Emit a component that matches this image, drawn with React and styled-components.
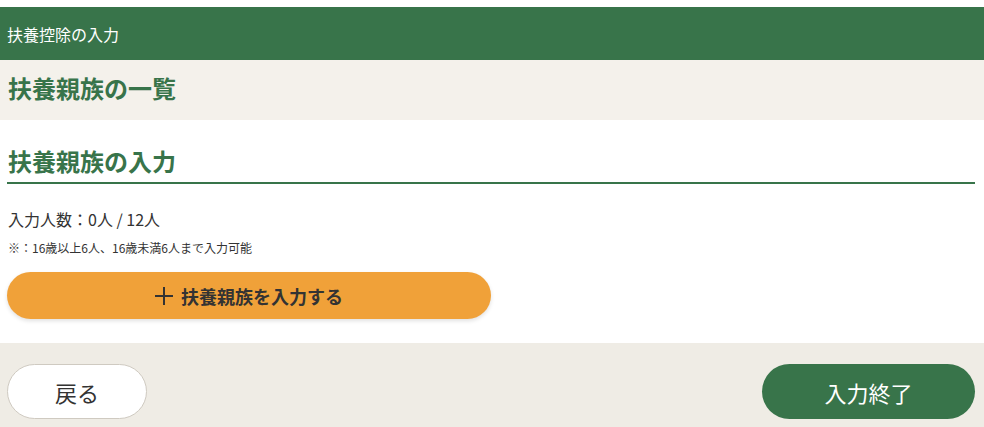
import React from "react";
import styled, { createGlobalStyle } from "styled-components";

const GlobalStyle = createGlobalStyle`
  html, body {
    margin: 0;
    padding: 0;
    background: #ffffff;
  }
  body {
    font-family: "Noto Sans CJK JP", "Noto Sans", sans-serif;
    color: #333333;
  }
`;

const Page = styled.div`
  padding-top: 7px;
  display: flex;
  flex-direction: column;
`;

const TopBar = styled.header`
  height: 53px;
  background: #38744a;
  color: #ffffff;
  display: flex;
  align-items: center;
  padding: 0 7px;
  font-size: 16px;
`;

const Section = styled.section`
  background: ${(p) => p.$bg || "#ffffff"};
  padding: 0 9px 0 7px;
`;

const Heading = styled.h2`
  margin: 0;
  color: #38744a;
  font-size: 24px;
  font-weight: 700;
  line-height: 24px;
  padding: ${(p) => (p.$underline ? "29px 1px 9px" : "16px 1px 20px")};
  border-bottom: ${(p) => (p.$underline ? "2px solid #38744a" : "none")};
`;

const Count = styled.p`
  margin: 23px 1px 0;
  font-size: 16px;
  line-height: 24px;
`;

const Note = styled.p`
  margin: 8px 1px 0;
  font-size: 12px;
  line-height: 18px;
`;

const AddButton = styled.button`
  margin: 15px 0 24px;
  width: 484px;
  height: 47px;
  border: none;
  border-radius: 24px;
  background: #f0a139;
  box-shadow: 0 2px 4px rgba(0, 0, 0, 0.12);
  font-family: inherit;
  font-size: 18px;
  font-weight: 700;
  color: #333333;
  display: flex;
  align-items: center;
  justify-content: center;
  gap: 8px;
  cursor: pointer;
`;

const Footer = styled.footer`
  background: #efece5;
  padding: 21px 9px 8px 7px;
  display: flex;
  justify-content: space-between;
`;

const FooterButton = styled.button`
  height: 55px;
  width: ${(p) => (p.$primary ? "213px" : "140px")};
  border-radius: 28px;
  border: ${(p) => (p.$primary ? "none" : "1px solid #cfcac1")};
  background: ${(p) => (p.$primary ? "#38744a" : "#ffffff")};
  color: ${(p) => (p.$primary ? "#ffffff" : "#333333")};
  font-family: inherit;
  font-size: 22px;
  cursor: pointer;
`;

const PlusIcon = () => (
  <svg width="18" height="18" viewBox="0 0 18 18" aria-hidden="true">
    <path d="M9 0v18M0 9h18" stroke="#333" strokeWidth="2" fill="none" />
  </svg>
);

export default function App() {
  return (
    <>
      <GlobalStyle />
      <Page>
        <TopBar>扶養控除の入力</TopBar>
        <Section $bg="#f4f1eb">
          <Heading>扶養親族の一覧</Heading>
        </Section>
        <Section>
          <Heading $underline>扶養親族の入力</Heading>
          <Count>入力人数：0人 / 12人</Count>
          <Note>※：16歳以上6人、16歳未満6人まで入力可能</Note>
          <AddButton>
            <PlusIcon />
            扶養親族を入力する
          </AddButton>
        </Section>
        <Footer>
          <FooterButton>戻る</FooterButton>
          <FooterButton $primary>入力終了</FooterButton>
        </Footer>
      </Page>
    </>
  );
}
